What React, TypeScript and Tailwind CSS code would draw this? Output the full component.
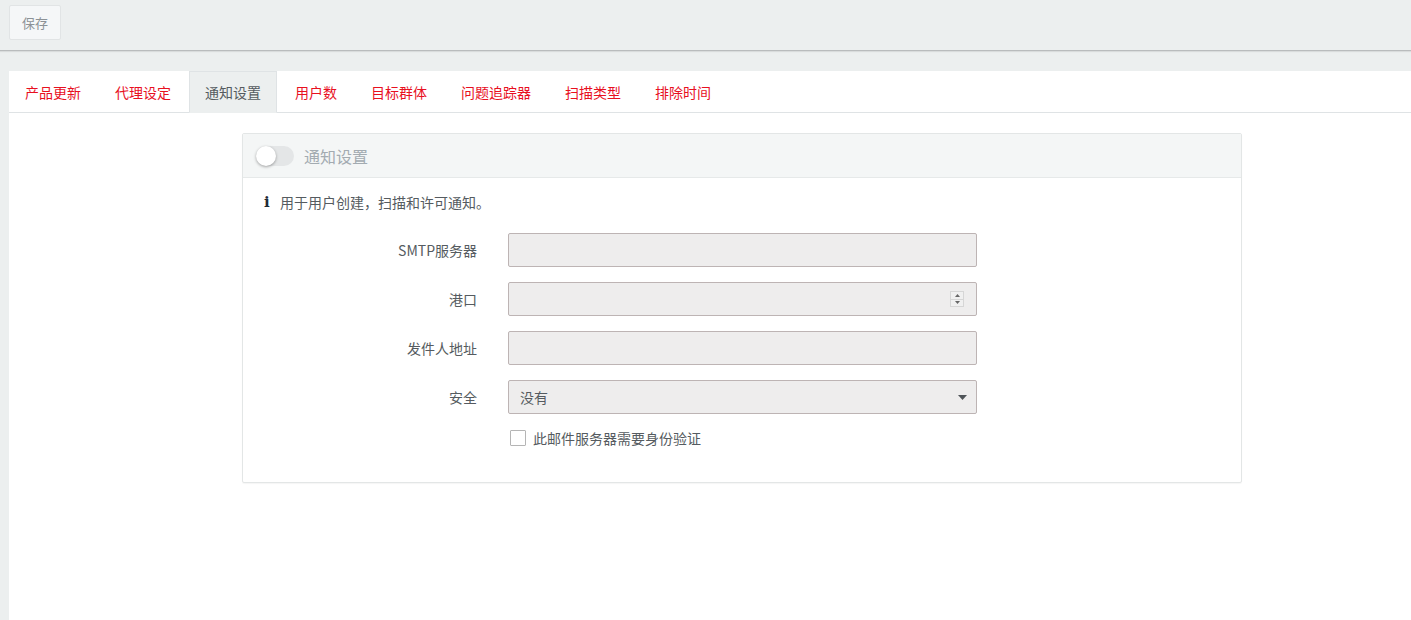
const tabs = ["产品更新", "代理设定", "通知设置", "用户数", "目标群体", "问题追踪器", "扫描类型", "排除时间"];

const fields = [
  { label: "SMTP服务器", kind: "text" },
  { label: "港口", kind: "number" },
  { label: "发件人地址", kind: "text" },
  { label: "安全", kind: "select" },
];

export default function App() {
  return (
    <div
      className="h-[620px] bg-[#ecefef] flex flex-col overflow-hidden"
      style={{ fontFamily: '"Noto Sans CJK SC", "Noto Sans", sans-serif' }}
    >
      {/* toolbar */}
      <div className="h-[51px] shrink-0 border-b border-[#b9bcbd] px-[9px] pt-[5px] shadow-[0_1px_1px_rgba(0,0,0,0.08)]">
        <button className="h-[35px] px-[12px] bg-[#f5f7f8] border border-[#e1e4e5] rounded-[2px] text-[13px] text-[#8c9296]">
          保存
        </button>
      </div>

      <div className="flex-1 mt-[20px] ml-[9px] bg-white">
        {/* tabs */}
        <div className="flex h-[42px] border-b border-[#dfe3e5]">
          {tabs.map((t) => {
            const active = t === "通知设置";
            return (
              <div
                key={t}
                className={`mr-[2px] px-[15px] border -mb-px flex items-center text-[14px] ${
                  active
                    ? "bg-[#ecefef] border-[#dfe3e5] border-b-[#ecefef] text-[#555b60]"
                    : "border-transparent text-[#e8101f]"
                }`}
              >
                {t}
              </div>
            );
          })}
        </div>

        {/* card */}
        <div className="mt-[20px] ml-[233px] w-[1000px] border border-[#e3e6e6] rounded-[2px] shadow-[0_1px_1px_rgba(0,0,0,0.04)]">
          <div className="h-[44px] bg-[#f4f6f6] border-b border-[#e6e9e9] flex items-center px-[13px] gap-[10px]">
            <div className="w-[38px] h-[20px] rounded-full bg-[#e4e6e7] relative">
              <div className="absolute left-0 top-0 w-[20px] h-[20px] rounded-full bg-white shadow-[0_1px_3px_rgba(0,0,0,0.35)]" />
            </div>
            <span className="text-[16px] text-[#a3abb1]">通知设置</span>
          </div>

          <div className="pt-[14px] pb-[34px]">
            <div className="flex items-center h-[20px] pl-[21px] gap-[10px] text-[14px] leading-[20px] text-[#555b60]">
              <span className="w-[6px] text-[15px] font-black text-[#1f2a34]" style={{ fontFamily: '"DejaVu Serif", serif' }}>
                i
              </span>
              <span>用于用户创建，扫描和许可通知。</span>
            </div>

            <div className="mt-[21px] flex flex-col gap-[15px]">
              {fields.map((f) => (
                <div key={f.label} className="flex items-center">
                  <label className="w-[234px] text-right text-[14px] text-[#555b60]">{f.label}</label>
                  <div className="ml-[31px] w-[469px] h-[34px] bg-[#eeeded] border border-[#bdb4b4] rounded-[2px] flex items-center px-[11px] text-[14px] text-[#555b60]">
                    {f.kind === "select" && (
                      <>
                        <span className="flex-1">没有</span>
                        <svg width="9" height="5" viewBox="0 0 9 5" className="mr-[-2px]">
                          <path d="M0 0h9L4.5 5z" fill="#4f5458" />
                        </svg>
                      </>
                    )}
                    {f.kind === "number" && (
                      <>
                        <span className="flex-1" />
                        <div className="w-[14px] h-[16px] border border-[#d6d6d6] bg-[#f0f0f0] flex flex-col mr-[1px]">
                          <div className="flex-1 flex items-center justify-center border-b border-[#d6d6d6]">
                            <svg width="5" height="3" viewBox="0 0 5 3">
                              <path d="M0 3h5L2.5 0z" fill="#666" />
                            </svg>
                          </div>
                          <div className="flex-1 flex items-center justify-center">
                            <svg width="5" height="3" viewBox="0 0 5 3">
                              <path d="M0 0h5L2.5 3z" fill="#666" />
                            </svg>
                          </div>
                        </div>
                      </>
                    )}
                  </div>
                </div>
              ))}

              <div className="flex items-center h-[20px] ml-[267px] mt-[-1px] gap-[7px]">
                <span className="w-[16px] h-[16px] border border-[#b5b5b5] bg-white rounded-[1px]" />
                <span className="text-[14px] leading-[20px] text-[#555b60]">此邮件服务器需要身份验证</span>
              </div>
            </div>
          </div>
        </div>
      </div>
    </div>
  );
}
